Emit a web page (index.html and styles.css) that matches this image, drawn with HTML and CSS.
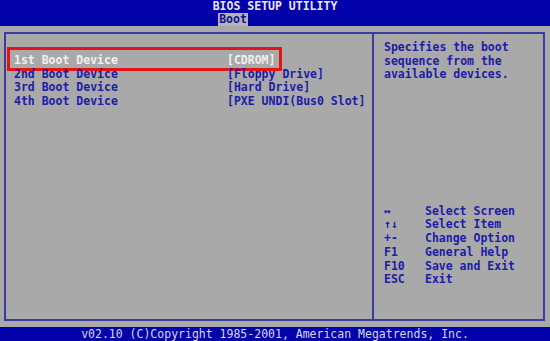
FILE: index.html
```html
<!DOCTYPE html>
<html>
<head>
<meta charset="utf-8">
<link rel="stylesheet" href="styles.css">
</head>
<body>
<div class="screen">
  <header class="top">
    <div class="title">BIOS SETUP UTILITY</div>
    <div class="tabs"><span class="tab active">Boot</span></div>
  </header>
  <main class="box">
    <section class="left">
      <div class="row selected"><span class="label">1st Boot Device</span><span class="value">[CDROM]</span></div>
      <div class="row"><span class="label">2nd Boot Device</span><span class="value">[Floppy Drive]</span></div>
      <div class="row"><span class="label">3rd Boot Device</span><span class="value">[Hard Drive]</span></div>
      <div class="row"><span class="label">4th Boot Device</span><span class="value">[PXE UNDI(Bus0 Slot]</span></div>
    </section>
    <aside class="right">
      <p class="help">Specifies the boot<br>sequence from the<br>available devices.</p>
      <div class="keys">
        <div class="key"><span class="k">↔</span><span>Select Screen</span></div>
        <div class="key"><span class="k">↑↓</span><span>Select Item</span></div>
        <div class="key"><span class="k">+-</span><span>Change Option</span></div>
        <div class="key"><span class="k">F1</span><span>General Help</span></div>
        <div class="key"><span class="k">F10</span><span>Save and Exit</span></div>
        <div class="key"><span class="k">ESC</span><span>Exit</span></div>
      </div>
    </aside>
  </main>
  <footer class="bottom">v02.10 (C)Copyright 1985-2001, American Megatrends, Inc.</footer>
</div>
</body>
</html>
```
FILE: styles.css
```css
*, *::before, *::after { box-sizing: border-box; }
html, body { margin: 0; padding: 0; }
body {
  width: 550px;
  height: 341px;
  overflow: hidden;
  background: #a9a9a9;
  font-family: "DejaVu Sans Mono", "Liberation Mono", monospace;
  font-weight: bold;
  font-size: 11.5px;
  color: #1c1ca6;
}
.screen {
  display: flex;
  flex-direction: column;
  height: 341px;
}
.top {
  height: 26px;
  background: #0202aa;
  display: flex;
  flex-direction: column;
  align-items: center;
}
.title {
  color: #e8e8f4;
  line-height: 13px;
  height: 13px;
}
.tabs {
  height: 13px;
  display: flex;
  justify-content: center;
  padding-right: 84px;
}
.tab {
  line-height: 13px;
  padding: 0 1px;
}
.tab.active {
  background: #b4b4b4;
  color: #10109a;
}
.box {
  margin: 6px 5px 6px 4px;
  height: 289px;
  border: 2px solid #3a3aa0;
  display: flex;
}
.left {
  width: 368px;
  border-right: 2px solid #3a3aa0;
  padding: 20px 0 0 8px;
}
.row {
  display: flex;
  height: 13.7px;
  line-height: 13.7px;
  white-space: pre;
  position: relative;
}
.label { width: 213px; }
.row.selected { color: #f0f0f0; }
.row.selected::after {
  content: "";
  position: absolute;
  left: -7px;
  top: -7px;
  width: 275px;
  height: 24px;
  border: 3px solid #e41414;
}
.right {
  flex: 1;
  padding: 7px 0 0 10px;
  display: flex;
  flex-direction: column;
}
.help {
  margin: 0;
  line-height: 13.6px;
}
.keys {
  margin-top: 123px;
}
.key {
  display: flex;
  height: 13.7px;
  line-height: 13.7px;
}
.k { width: 41px; }
.bottom {
  height: 14px;
  background: #0202aa;
  color: #d8d8ec;
  text-align: center;
  line-height: 14px;
  font-weight: normal;
}
```
